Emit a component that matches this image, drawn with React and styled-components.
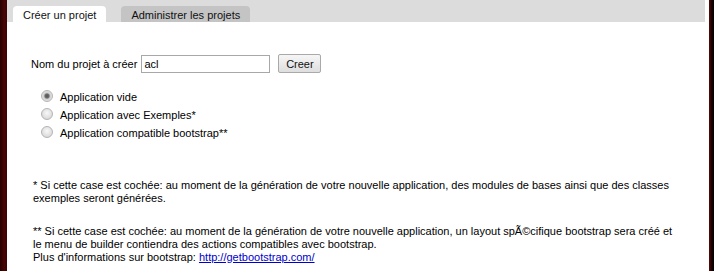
import React from 'react';
import styled, { createGlobalStyle } from 'styled-components';

const GlobalStyle = createGlobalStyle`
  html, body {
    margin: 0;
    height: 100%;
  }
  body {
    background: #1a0000;
    font-family: "Liberation Sans", Arial, sans-serif;
    font-size: 11px;
    color: #000;
  }
  #root {
    height: 100%;
  }
`;

const Page = styled.div`
  display: flex;
  height: 100%;
`;

const Edge = styled.div`
  width: ${(props) => props.width}px;
  flex-shrink: 0;
  background: ${(props) =>
    props.side === 'left'
      ? 'linear-gradient(to right, #240000, #4a0404 60%, #3a0202)'
      : 'linear-gradient(to right, #5a0808, #120000 60%, #000)'};
`;

const Panel = styled.div`
  flex: 1;
  display: flex;
  flex-direction: column;
  background: #fff;
  min-width: 0;
`;

const TabBar = styled.div`
  display: flex;
  align-items: flex-end;
  gap: 15px;
  height: 22px;
  padding-left: 6px;
  margin-right: 4px;
  background: #dcdcdc;
`;

const Tab = styled.div`
  display: flex;
  align-items: center;
  height: 16px;
  padding: 1px ${(props) => (props.active ? '10px' : '10px')} 0;
  background: ${(props) => (props.active ? '#fff' : '#c4c4c4')};
  border-radius: 4px 4px 0 0;
  font-size: 11px;
  line-height: 16px;
  box-sizing: border-box;
  color: #111;
`;

const Content = styled.div`
  display: flex;
  flex-direction: column;
  padding: 32px 0 0 24px;
`;

const FormRow = styled.div`
  display: flex;
  align-items: center;
  height: 19px;
`;

const Label = styled.span`
  margin-right: 4px;
`;

const TextInput = styled.input`
  width: 129px;
  height: 18px;
  box-sizing: border-box;
  border: 1px solid #a8a8a8;
  padding: 0 2px;
  font-family: "Liberation Sans", Arial, sans-serif;
  font-size: 11px;
  color: #000;
  outline: none;
`;

const Button = styled.button`
  margin-left: 8px;
  width: 43px;
  height: 19px;
  box-sizing: border-box;
  border: 1px solid #a9a9a9;
  border-radius: 2px;
  background: linear-gradient(to bottom, #f6f6f6, #dedede);
  font-family: "Liberation Sans", Arial, sans-serif;
  font-size: 11px;
  color: #111;
  padding: 0;
`;

const Choices = styled.div`
  display: flex;
  flex-direction: column;
  margin: 15px 0 0 10px;
`;

const Choice = styled.label`
  display: flex;
  align-items: center;
  height: 18px;
  line-height: 18px;
`;

const Radio = styled.input`
  appearance: none;
  margin: 0 7px 0 0;
  width: 12px;
  height: 12px;
  border-radius: 50%;
  border: 1px solid #b4b4b4;
  box-sizing: border-box;
  position: relative;
  top: -1px;
  background: radial-gradient(circle at 50% 40%, #f8f8f8, #d8d8d8 80%);
  &:checked {
    background: radial-gradient(circle, #555 0, #6a6a6a 2px, #cfcfcf 3.2px, #e8e8e8 80%);
  }
`;

const Notes = styled.div`
  display: flex;
  flex-direction: column;
  gap: 20px;
  margin: 37px 0 0 2px;
  padding-right: 30px;
`;

const Note = styled.p`
  margin: 0;
  line-height: 13px;
`;

const Link = styled.a`
  color: #0000cc;
  text-decoration: underline;
`;

const choices = [
  { label: 'Application vide', checked: true },
  { label: 'Application avec Exemples*' },
  { label: 'Application compatible bootstrap**' },
];

const App = () => (
  <>
    <GlobalStyle />
    <Page>
      <Edge side='left' width={7} />
      <Panel>
        <TabBar>
          <Tab active>Créer un projet</Tab>
          <Tab>Administrer les projets</Tab>
        </TabBar>
        <Content>
          <FormRow>
            <Label>Nom du projet à créer</Label>
            <TextInput defaultValue='acl' />
            <Button type='button'>Creer</Button>
          </FormRow>
          <Choices>
            {choices.map((c) => (
              <Choice key={c.label}>
                <Radio type='radio' name='type' defaultChecked={c.checked} />
                {c.label}
              </Choice>
            ))}
          </Choices>
          <Notes>
            <Note>
              * Si cette case est cochée: au moment de la génération de votre nouvelle application, des modules de bases ainsi que des classes exemples seront générées.
            </Note>
            <Note>
              ** Si cette case est cochée: au moment de la génération de votre nouvelle application, un layout spÃ©cifique bootstrap sera créé et le menu de builder contiendra des actions compatibles avec bootstrap.
              <br />
              Plus d'informations sur bootstrap: <Link href='#'>http://getbootstrap.com/</Link>
            </Note>
          </Notes>
        </Content>
      </Panel>
      <Edge side='right' width={5} />
    </Page>
  </>
);

export default App;
